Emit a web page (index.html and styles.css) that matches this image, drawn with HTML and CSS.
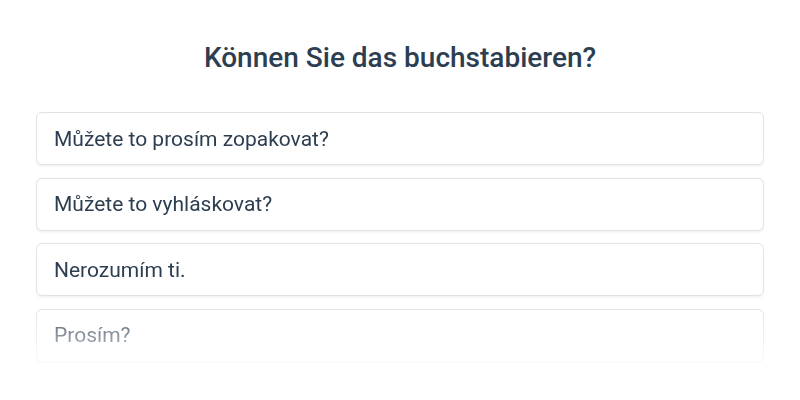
FILE: index.html
```html
<!DOCTYPE html>
<html lang="de">
<head>
<meta charset="utf-8">
<title>Quiz</title>
<link rel="stylesheet" href="styles.css">
</head>
<body>
<main class="quiz">
  <h1 class="question">Können Sie das buchstabieren?</h1>
  <div class="options">
    <div class="option">Můžete to prosím zopakovat?</div>
    <div class="option">Můžete to vyhláskovat?</div>
    <div class="option">Nerozumím ti.</div>
    <div class="option">Prosím?</div>
  </div>
</main>
</body>
</html>
```
FILE: styles.css
```css
html, body {
  margin: 0;
  padding: 0;
  background: #ffffff;
}
body {
  font-family: Roboto, "Liberation Sans", sans-serif;
  color: #2c3e50;
}
.quiz {
  padding: 41px 36px 0;
}
.question {
  margin: 0 0 37px;
  text-align: center;
  font-size: 28px;
  font-weight: 500;
  line-height: 34px;
  color: #2c3e50;
}
.options {
  display: flex;
  flex-direction: column;
  gap: 12.5px;
  height: 254px;
  overflow: hidden;
  -webkit-mask-image: linear-gradient(to bottom, #000 0, #000 calc(100% - 64px), rgba(0, 0, 0, 0.15) 100%);
  mask-image: linear-gradient(to bottom, #000 0, #000 calc(100% - 64px), rgba(0, 0, 0, 0.15) 100%);
}
.option {
  flex: none;
  height: 53px;
  box-sizing: border-box;
  display: flex;
  align-items: center;
  padding: 0 17px;
  border: 1px solid #e2e2e2;
  border-radius: 6px;
  background: #ffffff;
  box-shadow: 0 1px 3px rgba(0, 0, 0, 0.08);
  font-size: 21px;
  color: #2c3e50;
}
```
